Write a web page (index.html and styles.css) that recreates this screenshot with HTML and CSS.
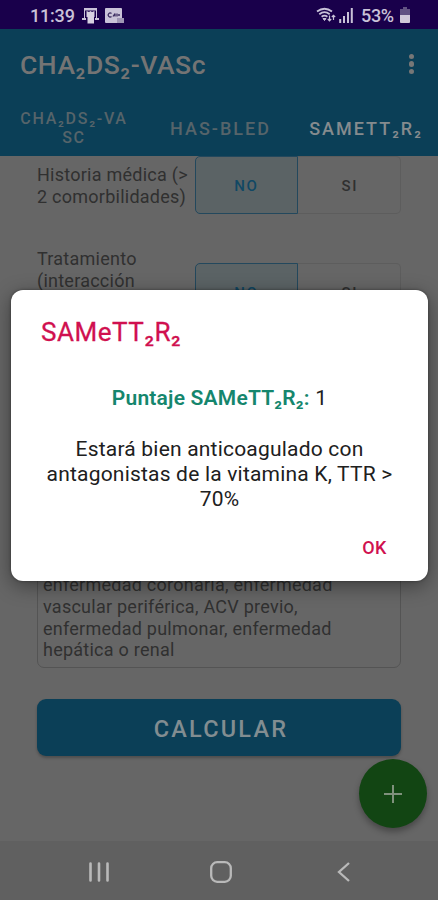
FILE: index.html
```html
<!DOCTYPE html>
<html lang="es">
<head>
<meta charset="utf-8">
<title>CHA₂DS₂-VASc</title>
<link rel="stylesheet" href="styles.css">
</head>
<body>
<div class="screen">
  <header class="status">
    <span class="clock">11:39</span>
    <svg class="st-call" width="17" height="17" viewBox="0 0 17 17"><path d="M2 1h13v10h2v2h-4v-2h1V3.500H3V11h1v2H0v-2h2z" fill="#c9c2d8"/><path d="M4.500 4l2.500 1 1.500-1 1.500 1 2.500-1v6H12v6.500H5.500V10h-1z" fill="#d8d2e2"/></svg>
    <svg class="st-card" width="19" height="15" viewBox="0 0 19 15"><rect width="17" height="15" rx="1" fill="#c9c2d8"/><path d="M12 10h7v5h-7z" fill="#9f96b5"/><path d="M6.500 5.500a2 2 0 1 0 0 3M8 8.500l2-3M10 5.500v3M12 5.500v3M13 7h2" stroke="#3b2b60" stroke-width="1.300" fill="none"/></svg>
    <svg class="st-wifi" width="20" height="16" viewBox="0 0 20 16" fill="none" stroke="#c9c2d8" stroke-width="1.800"><path d="M1 4.500Q8.500-1 16 4.500M3.300 7.200Q8.500 3.200 13.700 7.200M5.600 9.800Q8.500 7.500 11.400 9.800"/><path d="M7 11.500h3l-1.500 2z" fill="#c9c2d8" stroke-width="1"/><path d="M13.500 8.500v5M11.800 12l1.700 1.800 1.700-1.800M17.500 13V8.500M15.800 10l1.700-1.700 1.700 1.700" stroke-width="1.200"/></svg>
    <svg class="st-signal" width="14" height="15" viewBox="0 0 14 15" stroke="#c9c2d8" stroke-width="2"><path d="M1.200 11v4M5 8v7M9 4v11M12.800 0v15"/></svg>
    <span class="percent">53%</span>
    <svg class="st-batt" width="10" height="16" viewBox="0 0 10 16"><path d="M3 0h4v2h3v14H0V2h3z" fill="#615382"/><path d="M0 8h10v6.500q0 1.500-1.500 1.500h-7Q0 16 0 14.500z" fill="#d0cad9"/></svg>
  </header>

  <div class="appbar">
    <div class="toolbar">
      <h1 class="title">CHA₂DS₂-VASc</h1>
      <div class="more"><i></i><i></i><i></i></div>
    </div>
    <nav class="tabs">
      <div class="tab tab-small">CHA₂DS₂-VA<br>SC</div>
      <div class="tab tab-mid">HAS-BLED</div>
      <div class="tab tab-on">SAMETT₂R₂</div>
    </nav>
  </div>

  <main class="content">
    <div class="row">
      <div class="label">Historia médica (&gt;<br>2 comorbilidades)</div>
      <div class="toggle"><div class="opt on">NO</div><div class="opt">SI</div></div>
    </div>
    <div class="row row-second">
      <div class="label">Tratamiento<br>(interacción</div>
      <div class="toggle"><div class="opt on">NO</div><div class="opt">SI</div></div>
    </div>
    <div class="info"><span>enfermedad coronaria, enfermedad</span><span>vascular periférica, ACV previo,</span><span>enfermedad pulmonar, enfermedad</span><span>hepática o renal</span></div>
    <div class="calc">CALCULAR</div>
  </main>

  <footer class="navbar">
    <svg width="20" height="20" viewBox="0 0 20 20" stroke="#b9b9b9" stroke-width="2.600" stroke-linecap="round"><path d="M1.500 1.500v17M10 1.500v17M18.500 1.500v17"/></svg>
    <svg class="home" width="22" height="22" viewBox="0 0 22 22" fill="none" stroke="#b9b9b9" stroke-width="2.300"><rect x="1.200" y="1.200" width="19.600" height="19.600" rx="6"/></svg>
    <svg width="13" height="20" viewBox="0 0 13 20" fill="none" stroke="#b9b9b9" stroke-width="2.300"><path d="M12 1L2 10l10 9"/></svg>
  </footer>

  <div class="fab"><svg width="18" height="18" viewBox="0 0 18 18" stroke="#7f917c" stroke-width="2"><path d="M9 0v18M0 9h18"/></svg></div>

  <section class="dialog">
    <h2 class="dlg-title">SAMeTT₂R₂</h2>
    <p class="score"><b>Puntaje SAMeTT₂R₂:</b> 1</p>
    <p class="msg">Estará bien anticoagulado con<br>antagonistas de la vitamina K, TTR &gt;<br>70%</p>
    <div class="ok">OK</div>
  </section>
</div>
</body>
</html>
```
FILE: styles.css
```css
* { box-sizing: border-box; }
body { margin: 0; font-family: Roboto, "Liberation Sans", sans-serif; }
svg { display: block; flex: none; }
.screen { position: relative; width: 438px; height: 900px; overflow: hidden; background: #666; display: flex; flex-direction: column; }

.status { height: 29px; flex: none; background: #19004b; color: #c9c2d8; display: flex; align-items: center; padding: 1px 28px 0 30px; font-size: 18px; font-weight: 500; line-height: 29px; }
.clock { width: 52px; letter-spacing: -.2px; }
.st-card { margin-left: 6px; }
.st-wifi { margin-left: auto; }
.st-signal { margin-left: 3px; }
.percent { width: 33px; margin: 0 6px 0 8px; letter-spacing: -.3px; }

.appbar { height: 127px; flex: none; background: #0b3f57; color: #747474; }
.toolbar { height: 71px; display: flex; align-items: center; justify-content: space-between; padding: 0 24px 0 20px; }
.title { margin: 0; font-size: 26.500px; line-height: 30px; font-weight: 500; letter-spacing: .55px; }
.more { display: grid; gap: 2px; margin-top: -1px; }
.more i { width: 5.500px; height: 5.500px; border-radius: 50%; background: #777; }
.tabs { height: 56px; display: grid; grid-template-columns: 146px 146px 146px; align-items: center; text-align: center; font-weight: 500; color: #56646a; }
.tab { white-space: nowrap; }
.tab-small { font-size: 16px; line-height: 19px; letter-spacing: 1.700px; padding-left: 2px; }
.tab-mid { font-size: 18px; letter-spacing: 2px; padding-left: 3px; }
.tab-on { font-size: 18px; letter-spacing: 2px; padding-left: 2px; color: #858b8e; }

.content { flex: 1; padding: 0 37px; color: #303030; }
.row { display: flex; justify-content: space-between; height: 58px; }
.row-second { margin-top: 49px; }
.label { font-size: 18px; line-height: 22px; white-space: nowrap; padding-top: 8px; letter-spacing: .25px; }
.row-second .label { margin-top: -15px; padding-top: 0; }
.toggle { width: 206px; display: flex; flex: none; }
.opt { flex: 1; border: 1px solid #5d5d5d; border-left: 0; border-radius: 0 5px 5px 0; display: flex; align-items: center; justify-content: center; font-size: 15px; font-weight: 500; letter-spacing: 1.500px; color: #303030; padding: 2px 0 0 2px; }
.opt.on { border: 1.500px solid #23485d; border-radius: 5px 0 0 5px; background: #5b6365; color: #114864; padding-left: 0; }
.info { margin-top: 156px; height: 191px; border: 1.500px solid #545454; border-radius: 7px; padding: 96px 5px 5px; margin-bottom: 31px; display: flex; flex-direction: column; font-size: 18px; line-height: 21.800px; white-space: nowrap; letter-spacing: .25px; }
.calc { height: 57px; border-radius: 9px; background: #0b3f57; color: #828d91; display: flex; align-items: center; justify-content: center; font-size: 23.500px; font-weight: 500; letter-spacing: 2.200px; padding: 3px 0 0 4px; box-shadow: 0 2px 3px rgba(0,0,0,.25); }

.navbar { height: 59px; flex: none; background: #606060; display: flex; align-items: center; justify-content: space-between; padding: 3px 88px 0 89px; }
.home { margin-right: 5px; }

.fab { position: absolute; left: 359px; top: 759px; width: 68px; height: 69px; border-radius: 50%; background: #124513; display: flex; align-items: center; justify-content: center; box-shadow: 0 4px 6px rgba(0,0,0,.3); }

.dialog { position: absolute; left: 11px; top: 290px; width: 417px; height: 291px; background: #fff; border-radius: 12px; box-shadow: 0 5px 20px rgba(0,0,0,.4), 0 0 3px rgba(0,0,0,.4); color: #202020; }
.dlg-title { margin: 0; padding: 25px 0 0 30px; font-size: 26px; line-height: 34px; font-weight: 400; letter-spacing: .55px; color: #d0104f; -webkit-text-stroke: .3px; }
.score, .msg { margin: 0; text-align: center; font-size: 21px; line-height: 25px; white-space: nowrap; }
.score { margin-top: 37px; letter-spacing: .2px; }
.score b { font-weight: 600; color: #15866d; }
.msg { margin-top: 26px; letter-spacing: .2px; }
.ok { margin: 25px 41px 0 0; text-align: right; font-size: 18px; line-height: 22px; font-weight: 500; letter-spacing: .5px; color: #d0104f; }
```
